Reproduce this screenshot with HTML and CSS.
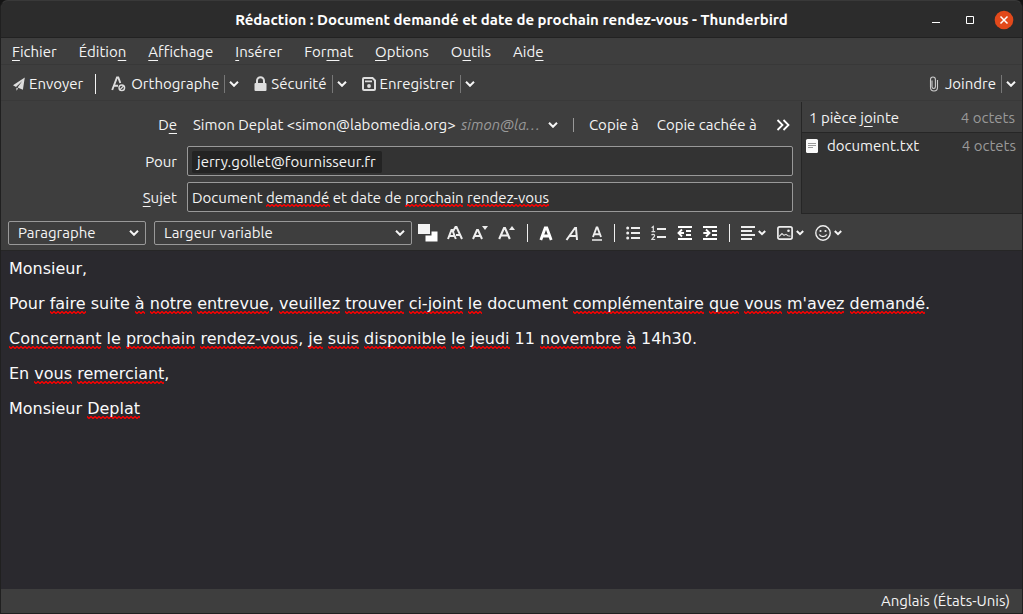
FILE: index.html
```html
<!DOCTYPE html>
<html lang="fr">
<head>
<meta charset="utf-8">
<title>Rédaction : Document demandé et date de prochain rendez-vous - Thunderbird</title>
<link rel="stylesheet" href="styles.css">
</head>
<body>
<div class="window">
  <header class="titlebar">
    <h1 class="title">Rédaction : Document demandé et date de prochain rendez-vous - Thunderbird</h1>
    <div class="window-controls">
      <button class="win-btn" aria-label="Réduire"><svg width="20" height="20" viewBox="0 0 20 20"><path d="M6 12.500h8" stroke="#fff"/></svg></button>
      <button class="win-btn" aria-label="Agrandir"><svg width="20" height="20" viewBox="0 0 20 20"><path d="M6.500 6.500h7v7h-7z" stroke="#fff" fill="none"/></svg></button>
      <button class="win-btn" aria-label="Fermer"><svg width="20" height="20" viewBox="0 0 20 20"><circle cx="10" cy="10" r="9.300" fill="#e2491b"/><path d="M6.500 6.500l7 7m0-7l-7 7" stroke="#fff" stroke-width="1.500"/></svg></button>
    </div>
  </header>

  <nav class="menubar" aria-label="Menu">
    <button class="menu"><u>F</u>ichier</button>
    <button class="menu">Éditio<u>n</u></button>
    <button class="menu"><u>A</u>ffichage</button>
    <button class="menu"><u>I</u>nsérer</button>
    <button class="menu">For<u>m</u>at</button>
    <button class="menu"><u>O</u>ptions</button>
    <button class="menu">O<u>u</u>tils</button>
    <button class="menu">Aid<u>e</u></button>
  </nav>

  <div class="toolbar" role="toolbar" aria-label="Rédaction">
    <button class="tool"><svg width="12" height="14" viewBox="0 0 12 14"><path d="M11.800.500L0 8.300l3 1.600L9.200 4 4.600 10.600l5.300 2.200zM3.400 10.800v2.900l1.800-2.100z" fill="#ddd"/></svg>Envoyer</button>
    <span class="divider"></span>
    <button class="tool"><svg width="16" height="16" viewBox="0 0 16 16"><path d="M1.200 14L6 1.500h1.300L9.300 7M3 9.800h4" fill="none" stroke="#ddd" stroke-width="1.900"/><circle cx="10.800" cy="11.800" r="2.800" fill="none" stroke="#ddd" stroke-width="1.400"/><path d="M9 13.600l3.600-3.600" stroke="#ddd" stroke-width="1.300"/></svg>Orthographe</button>
    <button class="drop" aria-label="Options d’orthographe"><svg class="chev" width="10" height="6" viewBox="0 0 10 6"><path d="M1 .8l4 4 4-4"/></svg></button>
    <button class="tool tool-lock"><svg width="13" height="16" viewBox="0 0 13 16"><path d="M3 8V4.800a3.500 3.500 0 0 1 7 0V8" fill="none" stroke="#ddd" stroke-width="2"/><rect x=".5" y="7" width="12" height="8" rx="1" fill="#ddd"/></svg>Sécurité</button>
    <button class="drop" aria-label="Options de sécurité"><svg class="chev" width="10" height="6" viewBox="0 0 10 6"><path d="M1 .8l4 4 4-4"/></svg></button>
    <button class="tool tool-save"><svg width="14" height="14" viewBox="0 0 14 14"><path d="M2 1h8.500L13 3.500V12a1 1 0 0 1-1 1H2a1 1 0 0 1-1-1V2a1 1 0 0 1 1-1z" fill="none" stroke="#ddd" stroke-width="2"/><path d="M3 4.300h7" stroke="#ddd" stroke-width="1.800"/><circle cx="7" cy="9" r="1.900" fill="#ddd"/></svg>Enregistrer</button>
    <button class="drop" aria-label="Options d’enregistrement"><svg class="chev" width="10" height="6" viewBox="0 0 10 6"><path d="M1 .8l4 4 4-4"/></svg></button>
    <span class="spacer"></span>
    <button class="tool tool-attach"><svg width="10" height="16" viewBox="0 0 10 16"><path d="M3 4.500v6.300a1.700 1.700 0 0 0 3.400 0V3.500a2.400 2.400 0 0 0-4.900 0v8a3.500 3.500 0 0 0 7 0V4" fill="none" stroke="#ccc" stroke-width="1.100"/></svg>Joindre</button>
    <button class="drop" aria-label="Options de pièce jointe"><svg class="chev" width="10" height="6" viewBox="0 0 10 6"><path d="M1 .8l4 4 4-4"/></svg></button>
  </div>

  <section class="headers">
    <div class="fields">
      <label class="label label-from" for="from">D<u>e</u></label>
      <div class="from-row">
        <select class="from-select" id="from"><option>Simon Deplat &lt;simon@labomedia.org&gt;</option></select>
        <span class="from-account">simon@la…</span>
        <svg class="chev" width="10" height="6" viewBox="0 0 10 6"><path d="M1 .8l4 4 4-4"/></svg>
        <span class="from-divider"></span>
        <button class="copy">Copie à</button>
        <button class="copy">Copie cachée à</button>
        <button class="more" aria-label="Autres champs"><svg width="14" height="12" viewBox="0 0 14 12"><path d="M1.500 1l5 5-5 5M7.500 1l5 5-5 5" fill="none" stroke="#fff" stroke-width="1.800"/></svg></button>
      </div>
      <label class="label" for="to">Pour</label>
      <div class="box">
        <span class="pill">jerry.gollet@fournisseur.fr</span>
        <input class="box-input" id="to">
      </div>
      <label class="label" for="subject"><u>S</u>ujet</label>
      <div class="box">
        <input class="box-input" id="subject" spellcheck="false" value="Document demandé et date de prochain rendez-vous">
        <svg class="marks" height="3" aria-hidden="true"><defs><pattern id="wave" width="4" height="3" patternUnits="userSpaceOnUse"><path d="M-1 1.500L0 .500 2 2.500 4 .500 5 1.500" fill="none" stroke="#f00" stroke-width="1.300"/></pattern></defs><rect x="74" width="64" height="3" fill="url(#wave)"/><rect x="213" width="58" height="3" fill="url(#wave)"/><rect x="275" width="82" height="3" fill="url(#wave)"/></svg>
      </div>
    </div>
    <aside class="attachments">
      <div class="attach-head"><span>1 pièce j<u>o</u>inte</span><span class="size">4 octets</span></div>
      <ul class="attach-list">
        <li class="attach-item"><svg width="14" height="16" viewBox="0 0 14 16"><rect x="1" y="1" width="12" height="14" rx="1.500" fill="#fafafa"/><path d="M3 5.500h8M3 7.500h8M3 9.500h5" stroke="#999"/></svg><span class="file">document.txt</span><span class="size">4 octets</span></li>
      </ul>
    </aside>
  </section>

  <div class="formatbar" role="toolbar" aria-label="Mise en forme">
    <div class="combos">
      <select class="combo combo-style" aria-label="Style de paragraphe"><option>Paragraphe</option></select>
      <select class="combo combo-font" aria-label="Police"><option>Largeur variable</option></select>
    </div>
    <div class="icons">
      <div class="group group-size">
        <button class="fmt" aria-label="Couleurs"><svg width="20" height="18" viewBox="0 0 20 18"><path d="M7.500 7.500h12v10h-12z" fill="#fff"/><path d="M-.5-.5h14v12h-14z" fill="#3e3e3e"/><path d="M0 0h12v10H0z" fill="#f4f4f4"/></svg></button>
        <button class="fmt" aria-label="Taille par défaut"><svg width="16" height="16" viewBox="0 0 16 16"><path d="M1 14L4.500 5h.8L8.800 14M2.500 11h5M6.300 6L8.500 2h1L15 14M9 10h4" fill="none" stroke="#eee" stroke-width="2"/></svg></button>
        <button class="fmt" aria-label="Réduire la taille"><svg width="17" height="16" viewBox="0 0 17 16"><path d="M1 14L5 5h1L10 14M3 11h5" fill="none" stroke="#eee" stroke-width="2"/><path d="M10 1h6l-3 4z" fill="#eee"/></svg></button>
        <button class="fmt" aria-label="Augmenter la taille"><svg width="18" height="16" viewBox="0 0 18 16"><path d="M1.200 14L6 3h1L11.800 14M3.500 10.500h6" fill="none" stroke="#eee" stroke-width="2.100"/><path d="M11 5h6l-3-4z" fill="#eee"/></svg></button>
      </div>
      <span class="bar"></span>
      <div class="group group-style">
        <button class="fmt" aria-label="Gras"><svg width="14" height="16" viewBox="0 0 14 16"><path d="M1.800 15L6.200 3h1.600L12.200 15M4 11h6" fill="none" stroke="#fff" stroke-width="2.800"/></svg></button>
        <button class="fmt" aria-label="Italique"><svg width="14" height="16" viewBox="0 0 14 16"><path d="M1.500 15L10 3h1L12 15M4.500 11h7" fill="none" stroke="#eee" stroke-width="2"/></svg></button>
        <button class="fmt" aria-label="Souligné"><svg width="12" height="16" viewBox="0 0 12 16"><path d="M2 12L5.600 2.500h.8L10 12M3.500 9.200h5" fill="none" stroke="#eee" stroke-width="1.900"/><path d="M1 15h10" stroke="#eee" stroke-width="1.600"/></svg></button>
      </div>
      <span class="bar"></span>
      <div class="group group-list">
        <button class="fmt" aria-label="Liste à puces"><svg width="14" height="14" viewBox="0 0 14 14"><path d="M5 2h9M5 7h9M5 12h9" stroke="#eee" stroke-width="2"/><g fill="#eee"><circle cx="1.700" cy="2" r="1.500"/><circle cx="1.700" cy="7" r="1.500"/><circle cx="1.700" cy="12" r="1.500"/></g></svg></button>
        <button class="fmt" aria-label="Liste numérotée"><svg width="15" height="16" viewBox="0 0 15 16"><path d="M6 4h9M6 12h9" stroke="#eee" stroke-width="2"/><path d="M.6 2.800L2.300 1.500v5.300M.5 6.600h3.700M.6 10.300c.5-1.500 3-1.300 3 .3 0 1.300-1.700 2.200-2.800 3.900h3.400" fill="none" stroke="#ddd" stroke-width="1.200"/></svg></button>
        <button class="fmt" aria-label="Diminuer le retrait"><svg width="15" height="14" viewBox="0 0 15 14"><path d="M1 1h14M9 5h5M9 9h5M1 13h14" stroke="#fff" stroke-width="2"/><path d="M5 3.500L1.500 7 5 10.500M1.500 7h5.500" fill="none" stroke="#fff" stroke-width="1.900"/></svg></button>
        <button class="fmt" aria-label="Augmenter le retrait"><svg width="15" height="14" viewBox="0 0 15 14"><path d="M0 1h14M9 5h5M9 9h5M0 13h14" stroke="#fff" stroke-width="2"/><path d="M3 3.500L6.500 7 3 10.500M6 7H.3" fill="none" stroke="#fff" stroke-width="1.900"/></svg></button>
      </div>
      <span class="bar"></span>
      <button class="fmt fmt-drop" aria-label="Alignement"><svg width="14" height="14" viewBox="0 0 14 14"><path d="M0 1h14M0 5h11M0 9h14M0 13h11" stroke="#eee" stroke-width="2"/></svg><svg class="chev" width="8" height="6" viewBox="0 0 8 6"><path d="M.8 1L4 4.200 7.200 1"/></svg></button>
      <button class="fmt fmt-drop" aria-label="Insérer"><svg width="16" height="14" viewBox="0 0 16 14"><rect x=".9" y=".9" width="14.200" height="12.200" rx="1.800" fill="none" stroke="#eee" stroke-width="1.700"/><path d="M2 10.500l3-3 2 1.800 2-1 2 1.500 2.500.5" fill="none" stroke="#ddd" stroke-width="1.100"/><circle cx="11.500" cy="4.700" r="1.300" fill="#eee"/></svg><svg class="chev" width="8" height="6" viewBox="0 0 8 6"><path d="M.8 1L4 4.200 7.200 1"/></svg></button>
      <button class="fmt fmt-drop" aria-label="Émoticônes"><svg width="16" height="16" viewBox="0 0 16 16"><circle cx="8" cy="8" r="7.200" fill="none" stroke="#eee" stroke-width="1.400"/><circle cx="5.500" cy="6" r="1.100" fill="#eee"/><circle cx="10.500" cy="6" r="1.100" fill="#eee"/><path d="M4.300 9.500c1.500 2.700 5.900 2.700 7.400 0" fill="none" stroke="#eee" stroke-width="1.300"/></svg><svg class="chev" width="8" height="6" viewBox="0 0 8 6"><path d="M.8 1L4 4.200 7.200 1"/></svg></button>
    </div>
  </div>

  <main class="editor" contenteditable="true" spellcheck="false" role="textbox" aria-multiline="true" aria-label="Corps du message">
    <p>Monsieur,</p>
    <p>Pour <span class="sp">faire</span> suite <span class="sp">à</span> <span class="sp">notre</span> <span class="sp">entrevue</span>, <span class="sp">veuillez</span> <span class="sp">trouver</span> <span class="sp">ci-joint</span> <span class="sp">le</span> document <span class="sp">complémentaire</span> <span class="sp">que</span> <span class="sp">vous</span> <span class="sp">m'avez</span> <span class="sp">demandé</span>.</p>
    <p><span class="sp">Concernant</span> <span class="sp">le</span> <span class="sp">prochain</span> <span class="sp">rendez-vous</span>, <span class="sp">je</span> <span class="sp">suis</span> <span class="sp">disponible</span> <span class="sp">le</span> <span class="sp">jeudi</span> 11 <span class="sp">novembre</span> <span class="sp">à</span> 14h30.</p>
    <p>En <span class="sp">vous</span> <span class="sp">remerciant</span>,</p>
    <p>Monsieur <span class="sp">Deplat</span></p>
  </main>

  <footer class="statusbar"><button class="lang">Anglais (États-Unis)</button></footer>
</div>
</body>
</html>
```
FILE: styles.css
```css
* { box-sizing: border-box; }

body {
  margin: 0;
  background: #141414;
  color: #f4f4f4;
  font: 15px/20px "Ubuntu", "Noto Sans", sans-serif;
}

button, input, select {
  margin: 0;
  padding: 0;
  border: 0;
  background: none;
  color: inherit;
  font: inherit;
}

u {
  text-decoration: underline;
  text-underline-offset: 3px;
  text-decoration-skip-ink: none;
}

svg { display: block; flex: none; }

.chev path { fill: none; stroke: #f4f4f4; stroke-width: 2; }

.window {
  display: flex;
  flex-direction: column;
  height: 100vh;
  border: 1px solid #202020;
  border-top-color: #393939;
  border-radius: 8px 8px 0 0;
  overflow: hidden;
  background: #3e3e3e;
}

.titlebar {
  display: grid;
  grid-template-columns: 1fr auto 1fr;
  align-items: center;
  height: 37px;
  padding-top: 1px;
  background: #2c2c2c;
  border-bottom: 1px solid #222;
}
.title { grid-column: 2; margin: 0; font-size: 15px; font-weight: 700; line-height: 20px; color: #fff; }
.window-controls { display: flex; justify-content: flex-end; gap: 14px; padding-right: 8px; }

.menubar {
  display: flex;
  align-items: center;
  gap: 22px;
  height: 27px;
  padding: 1px 11px 0;
  border-bottom: 1px solid #383838;
}

.toolbar {
  display: flex;
  align-items: center;
  height: 36px;
  padding: 3px 6px 0 12px;
  border-bottom: 1px solid #393939;
}
.tool { display: flex; align-items: center; gap: 4px; }
.tool-lock, .tool-save { margin-left: 15px; }
.tool-attach { gap: 6px; }
.divider { width: 1px; height: 20px; margin: 0 15px 0 12px; background: #f4f4f4; }
.drop { display: flex; align-items: center; height: 18px; margin-left: 5px; padding-left: 4px; border-left: 1px solid #777; }
.spacer { flex: 1; }

.headers { display: flex; padding-top: 1px; }
.fields {
  flex: 1;
  display: grid;
  grid-template-columns: 176px 1fr;
  grid-template-rows: 38px 30px 30px;
  gap: 6px 10px;
  align-items: center;
  min-width: 0;
  padding: 0 8px 2px 0;
}
.label { padding-top: 2px; text-align: right; }
.label-from { padding-top: 8px; }
.from-row { display: flex; align-items: center; padding: 8px 3px 0 6px; }
.from-select { appearance: none; }
.from-account { margin: 0 8px 0 5px; color: #999; font-style: italic; }
.from-divider { width: 1px; height: 14px; margin: 0 15px; background: #999; }
.copy { margin-right: 18px; white-space: nowrap; }
.more { margin-left: auto; }

.box {
  display: flex;
  align-items: center;
  position: relative;
  height: 30px;
  padding: 2px 4px 0;
  border: 1px solid #999;
  border-radius: 2px;
  background: #333;
}
.pill { padding: 1px 6px 1px 5px; border-radius: 2px; background: #232323; }
.box-input { flex: 1; min-width: 0; height: 20px; outline: none; }
.marks { position: absolute; left: 4px; bottom: 4px; width: 98%; pointer-events: none; }

.attachments {
  display: flex;
  flex: none;
  flex-direction: column;
  width: 221px;
  border-left: 1px solid #262626;
}
.attach-head {
  display: flex;
  justify-content: space-between;
  padding: 6px 7px 4px 7px;
  border-bottom: 1px solid #262626;
}
.attach-list { flex: 1; margin: 0; padding: 3px 6px 0 3px; list-style: none; background: #333; border-bottom: 1px solid #262626; }
.attach-item { display: flex; align-items: center; }
.file { flex: 1; margin-left: 8px; }
.size { color: #999; }

.formatbar {
  display: flex;
  align-items: center;
  gap: 6px;
  height: 37px;
  padding: 1px 7px 0;
  border-bottom: 1px solid #262626;
}
.combos { display: flex; gap: 8px; }
.combo {
  appearance: none;
  height: 24px;
  padding: 0 24px 0 9px;
  border: 1px solid #999;
  border-radius: 2px;
  background: url("data:image/svg+xml,%3Csvg xmlns='http://www.w3.org/2000/svg' width='10' height='6'%3E%3Cpath d='M1 .8l4 4 4-4' fill='none' stroke='%23f4f4f4' stroke-width='2'/%3E%3C/svg%3E") no-repeat right 6px center;
}
.combo-style { width: 138px; }
.combo-font { width: 258px; }
.icons { display: flex; align-items: center; gap: 11px; }
.group { display: flex; align-items: center; }
.group-size { gap: 9px; }
.group-style { gap: 12px; }
.group-list { gap: 11px; }
.fmt { display: flex; align-items: center; }
.fmt-drop { gap: 3px; }
.bar { width: 1px; height: 18px; background: #eee; }

.editor {
  flex: 1;
  padding: 8px;
  outline: none;
  background: #2a292e;
  color: #f9f9fa;
  font: 16px/19px "DejaVu Sans", sans-serif;
}
.editor p { margin: 0 0 16px; }
.sp {
  padding-bottom: 1px;
  background: url("data:image/svg+xml,%3Csvg xmlns='http://www.w3.org/2000/svg' width='4' height='3'%3E%3Cpath d='M-1 1.500L0 .5 2 2.500 4 .5 5 1.500' fill='none' stroke='%23f00' stroke-width='1.300'/%3E%3C/svg%3E") repeat-x left bottom;
}

.statusbar {
  display: flex;
  justify-content: flex-end;
  align-items: center;
  height: 24px;
  padding-right: 12px;
}
```
